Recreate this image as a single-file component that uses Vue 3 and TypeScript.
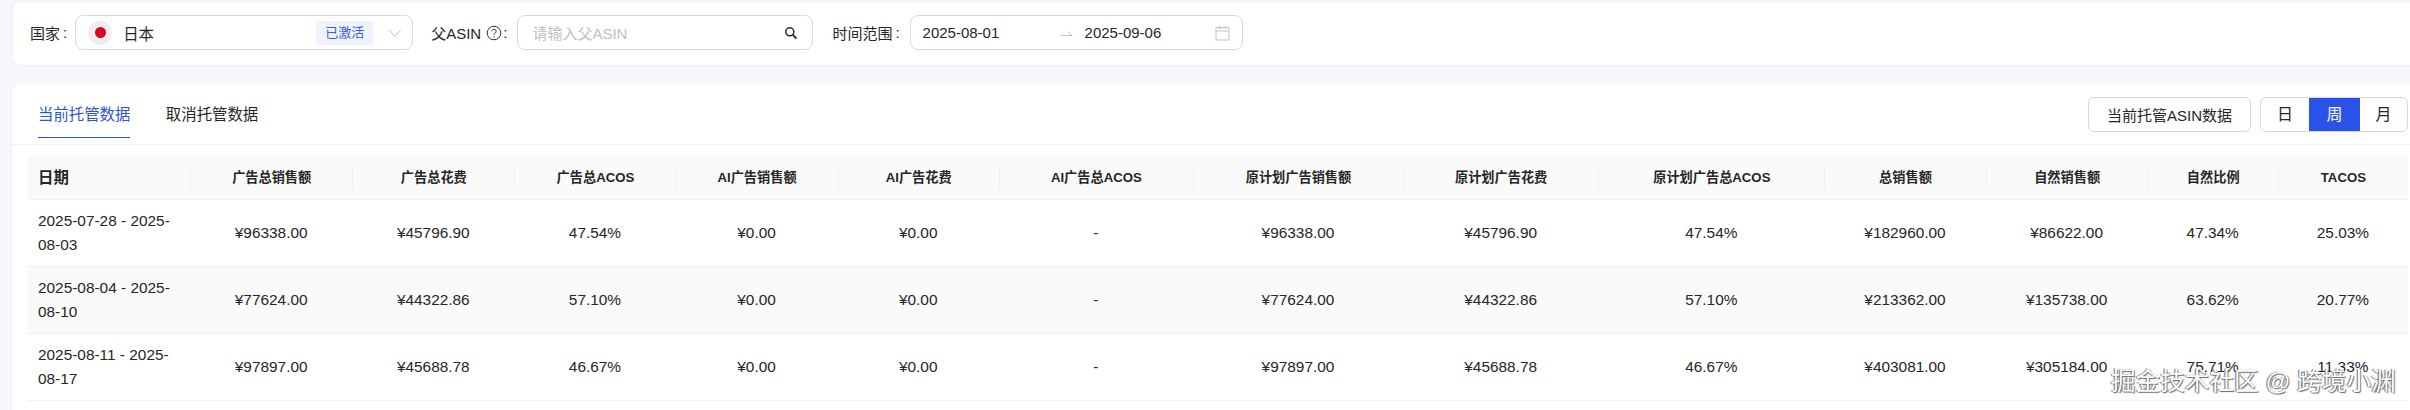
<script setup lang="ts">
import { ref } from 'vue';

interface Row {
  date: string;
  adSales: string;
  adSpend: string;
  adAcos: string;
  prevSales: string;
  prevSpend: string;
  prevAcos: string;
  totalSales: string;
  organicSales: string;
  organicRatio: string;
  tacos: string;
}

const columns = [
  { label: '日期', width: 162 },
  { label: '广告总销售额', width: 162 },
  { label: '广告总花费', width: 162 },
  { label: '广告总ACOS', width: 161 },
  { label: 'AI广告销售额', width: 162 },
  { label: 'AI广告花费', width: 161 },
  { label: 'AI广告总ACOS', width: 194 },
  { label: '原计划广告销售额', width: 210 },
  { label: '原计划广告花费', width: 195 },
  { label: '原计划广告总ACOS', width: 226 },
  { label: '总销售额', width: 161 },
  { label: '自然销售额', width: 162 },
  { label: '自然比例', width: 130 },
  { label: 'TACOS', width: 130 },
];

const rows: Row[] = [
  {
    date: '2025-07-28 - 2025-08-03',
    adSales: '¥96338.00', adSpend: '¥45796.90', adAcos: '47.54%',
    prevSales: '¥96338.00', prevSpend: '¥45796.90', prevAcos: '47.54%',
    totalSales: '¥182960.00', organicSales: '¥86622.00', organicRatio: '47.34%', tacos: '25.03%',
  },
  {
    date: '2025-08-04 - 2025-08-10',
    adSales: '¥77624.00', adSpend: '¥44322.86', adAcos: '57.10%',
    prevSales: '¥77624.00', prevSpend: '¥44322.86', prevAcos: '57.10%',
    totalSales: '¥213362.00', organicSales: '¥135738.00', organicRatio: '63.62%', tacos: '20.77%',
  },
  {
    date: '2025-08-11 - 2025-08-17',
    adSales: '¥97897.00', adSpend: '¥45688.78', adAcos: '46.67%',
    prevSales: '¥97897.00', prevSpend: '¥45688.78', prevAcos: '46.67%',
    totalSales: '¥403081.00', organicSales: '¥305184.00', organicRatio: '75.71%', tacos: '11.33%',
  },
];

const tab = ref('current');
const period = ref('周');
</script>

<template>
  <div class="page">
    <section class="filters">
      <label class="field-label">国家<span class="colon">:</span></label>
      <div class="control country">
        <span class="flag"><i></i></span>
        <span class="country-name">日本</span>
        <span class="badge">已激活</span>
        <svg class="chevron" width="14" height="14" viewBox="0 0 14 14" fill="none">
          <path d="M1.500 4l5.500 6.500L12.500 4" stroke="#bfbfbf" stroke-width="1" />
        </svg>
      </div>
      <label class="field-label asin-label">
        父ASIN
        <svg class="help" width="16" height="16" viewBox="0 0 16 16" fill="none">
          <circle cx="8" cy="8" r="6.800" stroke="#333" stroke-width="1" />
          <path d="M5.900 6.300a2.100 2.100 0 1 1 3.300 1.700c-.8.500-1.200.9-1.200 1.700" stroke="#333" stroke-width="1" />
          <circle cx="8" cy="11.600" r=".7" fill="#333" />
        </svg>
        <span class="colon">:</span>
      </label>
      <div class="control asin">
        <span class="placeholder">请输入父ASIN</span>
        <svg width="14" height="14" viewBox="0 0 14 14" fill="none">
          <circle cx="5.800" cy="5.800" r="4" stroke="#262626" stroke-width="1.500" />
          <path d="M8.800 8.800l3.700 3.700" stroke="#262626" stroke-width="1.800" />
        </svg>
      </div>
      <label class="field-label time-label">时间范围<span class="colon">:</span></label>
      <div class="control range">
        <span class="date-a">2025-08-01</span>
        <svg class="arrow" width="14" height="8" viewBox="0 0 14 8" fill="none">
          <path d="M1 6.500h12L9 2.500" stroke="#bfbfbf" stroke-width="1" />
        </svg>
        <span class="date-b">2025-09-06</span>
        <svg width="15" height="16" viewBox="0 0 15 16" fill="none">
          <rect x="1" y="2.500" width="13" height="12.500" stroke="#c4c4c4" />
          <path d="M1 6h13M4.500 1v3M10.500 1v3" stroke="#c4c4c4" />
        </svg>
      </div>
    </section>

    <section class="panel">
      <div class="panel-head">
        <div class="tabs">
          <span class="tab" :class="{ active: tab === 'current' }" @click="tab = 'current'">当前托管数据</span>
          <span class="tab" :class="{ active: tab === 'cancel' }" @click="tab = 'cancel'">取消托管数据</span>
        </div>
        <div class="actions">
          <button class="asin-btn">当前托管ASIN数据</button>
          <div class="segment">
            <span
              v-for="p in ['日', '周', '月']"
              :key="p"
              class="seg"
              :class="{ on: period === p }"
              @click="period = p"
            >{{ p }}</span>
          </div>
        </div>
      </div>

      <table class="grid">
        <colgroup>
          <col v-for="c in columns" :key="c.label" :style="{ width: c.width + 'px' }" />
        </colgroup>
        <thead>
          <tr>
            <th v-for="c in columns" :key="c.label"><span class="th-in">{{ c.label }}</span></th>
          </tr>
        </thead>
        <tbody>
          <tr v-for="r in rows" :key="r.date">
            <td>{{ r.date }}</td>
            <td>{{ r.adSales }}</td>
            <td>{{ r.adSpend }}</td>
            <td>{{ r.adAcos }}</td>
            <td>¥0.00</td>
            <td>¥0.00</td>
            <td>-</td>
            <td>{{ r.prevSales }}</td>
            <td>{{ r.prevSpend }}</td>
            <td>{{ r.prevAcos }}</td>
            <td>{{ r.totalSales }}</td>
            <td>{{ r.organicSales }}</td>
            <td>{{ r.organicRatio }}</td>
            <td>{{ r.tacos }}</td>
          </tr>
        </tbody>
      </table>
    </section>

    <div class="watermark">掘金技术社区 @ 跨境小渊</div>
  </div>
</template>

<style>
html, body {
  margin: 0;
  background: #f5f7fa;
}
</style>

<style scoped>
.page {
  position: relative;
  width: 2410px;
  height: 410px;
  overflow: hidden;
  padding: 1px 0 0 12px;
  box-sizing: border-box;
  font-family: "Liberation Sans", "Noto Sans CJK SC", sans-serif;
  font-size: 15.4px;
  color: #262626;
}
.filters {
  height: 65px;
  background: #fff;
  border: 1px solid #eff1f4;
  border-right: 0;
  border-radius: 8px 0 0 8px;
  display: flex;
  align-items: center;
  padding: 0 0 2px 17px;
  box-sizing: border-box;
}
.field-label {
  font-size: 15px;
  white-space: nowrap;
  display: flex;
  align-items: center;
}
.colon {
  margin-left: 3px;
  margin-right: -1px;
}
.control {
  height: 35px;
  box-sizing: border-box;
  border: 1px solid #d9d9d9;
  border-radius: 8px;
  background: #fff;
  display: flex;
  align-items: center;
}
.country {
  width: 338px;
  margin-left: 9px;
  padding: 0 10px 0 12px;
}
.flag {
  width: 24px;
  height: 24px;
  border-radius: 50%;
  background: #eeeeee;
  display: flex;
  align-items: center;
  justify-content: center;
}
.flag i {
  width: 11px;
  height: 11px;
  border-radius: 50%;
  background: #d80027;
}
.country-name {
  margin-left: 11px;
}
.badge {
  margin-left: auto;
  height: 24px;
  line-height: 24px;
  padding: 0 9px;
  border-radius: 3px;
  background: #eef3fe;
  color: #3b5bdb;
  font-size: 13px;
}
.chevron {
  margin-left: 15px;
}
.asin-label {
  margin-left: 18px;
}
.help {
  margin-left: 5px;
}
.asin-label .colon {
  margin-left: 1px;
}
.asin {
  width: 296px;
  margin-left: 11px;
  padding: 0 14px;
  justify-content: space-between;
}
.placeholder {
  color: #bfbfbf;
  font-size: 15px;
}
.time-label {
  margin-left: 19px;
}
.range {
  width: 333px;
  margin-left: 11px;
  padding: 0 12px;
  font-size: 15px;
}
.date-a {
  width: 136px;
}
.date-b {
  margin-left: 12px;
  margin-right: auto;
}
.arrow {
  flex: none;
}
.panel {
  margin-top: 18px;
  height: 340px;
  background: #fff;
  border-radius: 8px 0 0 0;
  box-shadow: 0 0 0 1px #f1f2f5;
  box-sizing: border-box;
}
.panel-head {
  height: 61px;
  box-sizing: border-box;
  border-bottom: 1px solid #f0f0f0;
  display: flex;
  justify-content: space-between;
  padding: 13px 2px 0 26px;
}
.tabs {
  display: flex;
  gap: 35.500px;
}
.tab {
  height: 41px;
  line-height: 36px;
  box-sizing: border-box;
  cursor: pointer;
}
.tab.active {
  color: #2f54d0;
  border-bottom: 1px solid #2f54d0;
}
.actions {
  display: flex;
  gap: 9px;
  height: 35px;
}
.asin-btn {
  width: 163px;
  height: 35px;
  border: 1px solid #d9d9d9;
  border-radius: 6px;
  background: #fff;
  font: inherit;
  font-size: 15px;
  color: #262626;
  padding: 0;
}
.segment {
  display: flex;
  border: 1px solid #d9d9d9;
  border-radius: 6px;
  overflow: hidden;
  box-sizing: border-box;
  height: 35px;
  font-size: 16px;
}
.seg {
  width: 51px;
  line-height: 33px;
  text-align: center;
  cursor: pointer;
}
.seg:first-child { width: 48px; }
.seg:last-child { width: 47px; }
.seg.on {
  background: #2b52e8;
  color: #fff;
}
.grid {
  margin: 11px 0 0 16px;
  width: 2380px;
  table-layout: fixed;
  border-collapse: collapse;
}
th {
  height: 43px;
  padding: 0;
  background: #fafafa;
  border-bottom: 1px solid #f0f0f0;
  font-size: 13.200px;
  font-weight: 700;
  text-align: center;
}
.th-in {
  display: block;
  height: 24px;
  line-height: 24px;
  border-left: 1px solid #f0f0f0;
}
th:first-child {
  font-size: 15.400px;
  text-align: left;
}
th:first-child .th-in {
  border-left: 0;
  padding-left: 10px;
}
td {
  height: 67px;
  box-sizing: border-box;
  padding: 0 10px;
  border-bottom: 1px solid #f0f0f0;
  text-align: center;
  line-height: 24px;
}
td:first-child {
  text-align: left;
}
tbody tr:nth-child(2) td {
  background: #fafafa;
}
.watermark {
  position: absolute;
  left: 2111px;
  top: 367px;
  font-size: 24.600px;
  line-height: 30px;
  white-space: nowrap;
  color: #fff;
  text-shadow: 1px 1px 1px #666, -1px 0 1px #666;
}
</style>
